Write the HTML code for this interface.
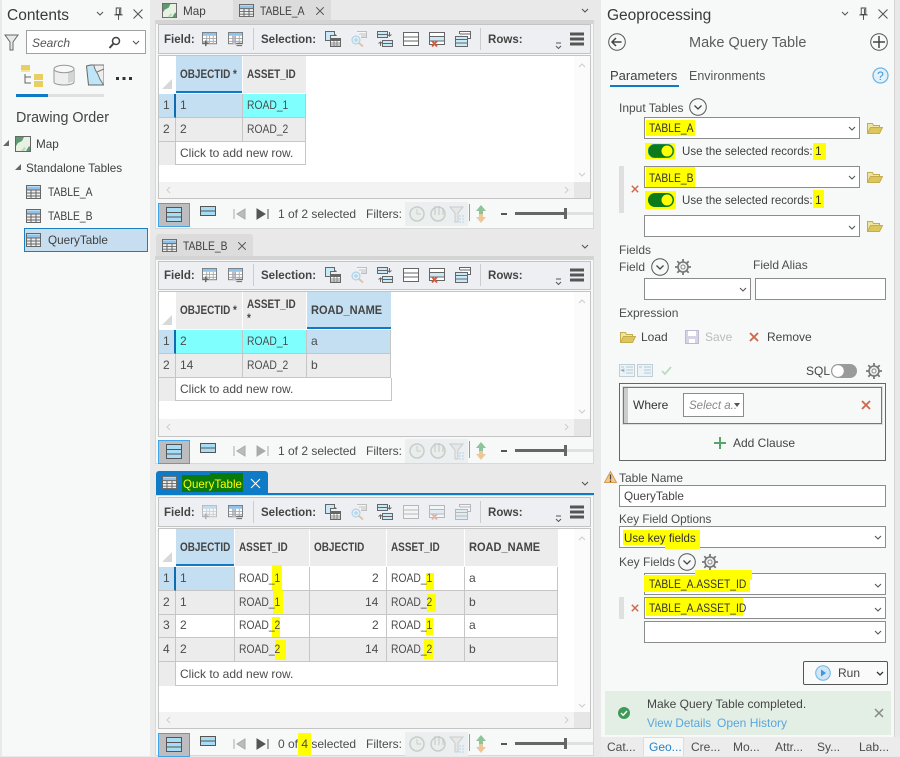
<!DOCTYPE html>
<html><head><meta charset="utf-8"><style>
html,body{margin:0;padding:0}
body{width:900px;height:756px;position:relative;overflow:hidden;background:#e9e9e9;font-family:"Liberation Sans",sans-serif;font-size:12px;color:#4c4c4c}
div,svg{position:absolute}
.t{position:absolute;line-height:16px;white-space:nowrap;height:16px}
.n,.b,.g,.k,.hd,.hn{transform-origin:0 50%}
.n{transform:scaleX(.96)}
.b{font-weight:bold;color:#444;transform:scaleX(.96)}
.g{color:#3f3f3f;transform:scaleX(.975)}
.k{transform:scaleX(.86)}
.hd{font-weight:bold;color:#444;font-size:11.500px;transform:scaleX(.865)}
.hn{font-weight:bold;color:#444;font-size:11.500px;transform:scaleX(.96)}
.y{background:#ff0;position:absolute}
.in{background:#fff;border:1px solid #8c8c8c;box-sizing:border-box}
.h{background:#ececec;box-sizing:border-box}
.c{box-sizing:border-box;border-right:1px solid #c6c6c6;border-bottom:1px solid #c6c6c6}
</style></head><body>
<svg width="0" height="0" style="left:0;top:0">
<defs>
<symbol id="tbl" viewBox="0 0 16 16"><rect x=".5" y="1.500" width="15" height="13" fill="#fff" stroke="#666"/><rect x="1" y="2" width="14" height="3" fill="#6eb4e6"/><path d="M1 5h14M1 8h14M1 11h14M4.500 5v9M8 5v9M11.500 5v9" stroke="#666" fill="none"/></symbol>
<symbol id="fadd" viewBox="0 0 16 16"><rect x=".5" y=".5" width="15" height="12" fill="#fff" stroke="#777"/><rect x="1" y="1" width="14" height="3" fill="#8cc4ee"/><path d="M1 7h14M1 10h14M5 4v9M8 4v9M12 4v9" stroke="#aaa" fill="none"/><path d="M1 12h6M4 9v6" stroke="#666" stroke-width="1.600" fill="none"/></symbol>
<symbol id="frem" viewBox="0 0 16 16"><rect x=".5" y=".5" width="15" height="12" fill="#fff" stroke="#777"/><rect x="1" y="1" width="14" height="3" fill="#8cc4ee"/><rect x="5" y="4" width="3" height="9" fill="#c9bddd"/><path d="M1 7h14M1 10h14M5 4v9M8 4v9M12 4v9" stroke="#aaa" fill="none"/><path d="M9 12h6M9 14.500h6" stroke="#666" fill="none"/></symbol>
<symbol id="sel" viewBox="0 0 16 16"><path d="M.5.500h9v3l2 1h-6v5H.5z" fill="#c8e9f8" stroke="#666"/><rect x="5.500" y="7.500" width="10" height="8" fill="#fff" stroke="#666"/><rect x="6" y="8" width="9" height="2" fill="#666"/><path d="M6 12h9M6 14h9M9 10v5M12 10v5" stroke="#888"/></symbol>
<symbol id="zoom" viewBox="0 0 16 16"><g opacity=".55"><path d="M6 .500h9.500v6H10" fill="#fff" stroke="#999"/><path d="M8 3h7M10 5h5" stroke="#999"/><circle cx="5" cy="9" r="4" fill="#d7eefb" stroke="#6fb2dc"/><path d="M3 9h4M5 7v4" stroke="#6fb2dc"/><path d="M8 12l4 3.500" stroke="#d8a070" stroke-width="2"/></g></symbol>
<symbol id="swi" viewBox="0 0 16 16"><rect x=".5" y=".5" width="10" height="6" fill="#c8e9f8" stroke="#666"/><path d="M1 3.500h9" stroke="#666"/><rect x="5.500" y="9.500" width="10" height="6" fill="#c8e9f8" stroke="#666"/><path d="M6 12.500h9" stroke="#666"/><path d="M12.500 1v4l-2-1.500M12.500 5l2-1.500M3.500 15v-4l-2 1.500M3.500 11l2 1.500" stroke="#666" fill="none"/></symbol>
<symbol id="clr" viewBox="0 0 16 16"><rect x=".5" y="1.500" width="15" height="13" fill="#fff" stroke="#666"/><path d="M1 6h14M1 10h14" stroke="#666"/></symbol>
<symbol id="del" viewBox="0 0 16 16"><rect x=".5" y="1.500" width="15" height="12" fill="#fff" stroke="#666"/><rect x="1" y="6" width="14" height="4" fill="#c8e9f8"/><path d="M1 5.500h14M1 10h14" stroke="#666"/><path d="M3 10l5 5.500M8 10l-5 5.500" stroke="#d0593b" stroke-width="1.800"/></symbol>
<symbol id="cpy" viewBox="0 0 16 16"><path d="M4.500 3V.5h11v7H13" fill="#fff" stroke="#666"/><path d="M5 3h10" stroke="#666"/><rect x=".5" y="5.500" width="12" height="10" fill="#c8e9f8" stroke="#666"/><path d="M1 8.500h11M1 12h11" stroke="#666" fill="#fff"/></symbol>
<symbol id="fold" viewBox="0 0 16 12"><path d="M.5 11.500V1.500h5l1 2h6v2" fill="#efe3a6" stroke="#c5ad4e"/><path d="M.5 11.500l3-6h12l-3 6z" fill="#dcc75d" stroke="#c5ad4e"/></symbol>
<symbol id="gear" viewBox="0 0 16 16"><circle cx="8" cy="8" r="5" fill="#eee" stroke="#777" stroke-width="1.600"/><circle cx="8" cy="8" r="2" fill="#fff" stroke="#888"/><path d="M8 0v3M8 13v3M0 8h3M13 8h3M2.300 2.300l2 2M11.700 11.700l2 2M13.700 2.300l-2 2M4.300 11.700l-2 2" stroke="#777" stroke-width="1.800"/></symbol>
<symbol id="chc" viewBox="0 0 18 18"><circle cx="9" cy="9" r="8.300" fill="none" stroke="#555" stroke-width="1"/><path d="M5.500 7.500l3.500 3.500 3.500-3.500" fill="none" stroke="#444" stroke-width="1.300"/></symbol>
<symbol id="x" viewBox="0 0 10 10"><path d="M1 1l8 8M9 1l-8 8" stroke="#d0654a" stroke-width="1.800" fill="none"/></symbol>
<symbol id="dd" viewBox="0 0 8 5"><path d="M1 1l3 3 3-3" fill="none" stroke="#555" stroke-width="1.100"/></symbol>
<symbol id="cl" viewBox="0 0 12 12"><path d="M1.500 1.500l9 9M10.500 1.500l-9 9" stroke="#555" stroke-width="1.100" fill="none"/></symbol>
<symbol id="pin" viewBox="0 0 12 14"><path d="M3.500 1h5v7h-5zM1.500 8.500h9M6 9v5M7 2v6" stroke="#444" fill="none"/></symbol>
<symbol id="map" viewBox="0 0 16 16"><rect x=".5" y=".5" width="15" height="15" fill="#e8f2e2" stroke="#666"/><path d="M1 1h8l-2 4-4 2-2 3z" fill="#5d9a72"/><path d="M11 15l3-5 1 1v4z" fill="#5d9a72"/><path d="M6 15l3-4 2 1-2 3z" fill="#bfd9c0"/></symbol>
<symbol id="tb" viewBox="0 0 15 14" preserveAspectRatio="none"><rect x=".5" y=".5" width="14" height="13" fill="#f0f0f0" stroke="#666"/><path d="M1 3h13" stroke="#8cc4ee" stroke-width="3"/><path d="M1 5h13M1 8h13M1 11h13M5 5v9M10 5v9" stroke="#666"/></symbol>
<symbol id="stat" viewBox="0 0 240 24">
<g fill="none">
<rect x=".5" y=".5" width="31" height="23" fill="#bdbdc0" stroke="#3ea6e8"/>
<rect x="8.500" y="4.500" width="15" height="14" fill="#a8dcf4" stroke="#555"/>
<path d="M8 9.500h16M8 14h16" stroke="#555" fill="#fff"/>
<rect x="42.500" y="3.500" width="15" height="9" fill="#a8dcf4" stroke="#555"/>
<path d="M42 8h16" stroke="#555"/>
</g></symbol>
<symbol id="filt" viewBox="0 0 64 24">
<rect width="63" height="24" fill="#eceff0"/>
<g opacity=".4"><circle cx="12" cy="12" r="7" fill="#e3efe3" stroke="#999" stroke-width="1.500"/><path d="M12 7v5h4" stroke="#999" fill="none"/>
<circle cx="33" cy="12" r="7" fill="#e3efe3" stroke="#999" stroke-width="1.500"/><path d="M30 4v9M34 4v9M38 6v7" stroke="#888"/>
<path d="M45 5h13l-5 6v9h-3v-9z" fill="#ddd" stroke="#999"/><path d="M54 14h6M54 17h6M54 20h6" stroke="#6fb2dc" stroke-dasharray="2 1"/></g></symbol>
<symbol id="updn" viewBox="0 0 10 18"><path d="M5 0l5 6H7v3H3V6H0z" fill="#8fc39a"/><path d="M5 18l5-6H7V9H3v3H0z" fill="#ecc79a"/></symbol>
</defs></svg>

<!-- contents panel -->
<div style="left:2px;top:0;width:148px;height:756px;background:#f7f8f8"></div>
<div class="t" style="left:7px;top:7px;font-size:15.500px;line-height:18px;height:18px;color:#3a3a3a">Contents</div>
<svg style="left:96px;top:11px" width="8" height="5"><use href="#dd"/></svg>
<svg style="left:113px;top:7px" width="11" height="13"><use href="#pin"/></svg>
<svg style="left:132px;top:8px" width="12" height="12"><use href="#cl"/></svg>
<svg style="left:4px;top:34px" width="15" height="17"><path d="M1 1h13L9 8v8H6V8z" fill="#e9e9e9" stroke="#666"/></svg>
<div style="left:26px;top:30px;width:120px;height:24px;background:#fff;border:1px solid #a0a0a0;box-sizing:border-box"></div>
<div class="t" style="left:32px;top:35px;font-style:italic;color:#555">Search</div>
<svg style="left:108px;top:36px" width="13" height="13"><circle cx="8" cy="5" r="3.500" fill="none" stroke="#444" stroke-width="1.500"/><path d="M5.500 7.500L1.500 12" stroke="#444" stroke-width="2"/></svg>
<svg style="left:132px;top:40px" width="8" height="5"><use href="#dd"/></svg>
<svg style="left:20px;top:64px" width="24" height="23"><path d="M5 10v9h6M5 13h6" fill="none" stroke="#666"/><rect x="1" y="1" width="9" height="5" fill="#e8cf62"/><rect x="1" y="6" width="9" height="2" fill="#f3e49a"/><rect x="14" y="10" width="9" height="6" fill="#e8cf62"/><rect x="14" y="17" width="9" height="6" fill="#e8cf62"/></svg>
<svg style="left:53px;top:64px" width="22" height="22"><path d="M1 5v13c0 4 20 4 20 0V5z" fill="#eee" stroke="#999"/><path d="M15 8v11l6-2V6z" fill="#d4d4d4"/><ellipse cx="11" cy="5" rx="10" ry="3.700" fill="#f8f8f8" stroke="#999"/></svg>
<svg style="left:86px;top:64px" width="18" height="22"><path d="M.5 2l4-1H18v20H2.500z" fill="#bfe6f8" stroke="#666"/><path d="M8 1c0 5 4 8 5 12s4 5 4 8h1V1z" fill="#eee" stroke="#777"/><path d="M11 8l7-3" stroke="#777"/></svg>
<svg style="left:116px;top:77px" width="16" height="3"><rect width="3" height="3" fill="#333"/><rect x="6.500" width="3" height="3" fill="#333"/><rect x="13" width="3" height="3" fill="#333"/></svg>
<div style="left:16px;top:94px;width:88px;height:3px;background:#e0e0e0"></div>
<div style="left:16px;top:94px;width:32px;height:3px;background:#0f7ac6"></div>
<div class="t" style="left:16px;top:110px;font-size:14.300px;color:#444">Drawing Order</div>
<svg style="left:3px;top:140px" width="7" height="7"><path d="M6 0v6H0z" fill="#666"/></svg>
<svg style="left:15px;top:136px" width="16" height="16"><use href="#map"/></svg>
<div class="t g" style="left:36px;top:136px">Map</div>
<svg style="left:15px;top:164px" width="7" height="7"><path d="M6 0v6H0z" fill="#666"/></svg>
<div class="t g" style="left:26px;top:160px">Standalone Tables</div>
<svg style="left:26px;top:185px" width="15" height="14"><use href="#tb"/></svg>
<div class="t k" style="left:48px;top:184px;color:#3f3f3f">TABLE_A</div>
<svg style="left:26px;top:209px" width="15" height="14"><use href="#tb"/></svg>
<div class="t k" style="left:48px;top:208px;color:#3f3f3f">TABLE_B</div>
<div style="left:24px;top:228px;width:124px;height:24px;background:#c7ddf0;border:1px solid #1a7fbf;box-sizing:border-box"></div>
<svg style="left:26px;top:233px" width="15" height="14"><use href="#tb"/></svg>
<div class="t g" style="left:48px;top:232px">QueryTable</div>

<!-- PANE 1 -->
<svg style="left:162px;top:3px" width="15" height="15"><use href="#map"/></svg>
<div class="t g" style="left:183px;top:3px">Map</div>
<div style="left:233px;top:0;width:98px;height:20px;background:#dcdcdc"></div>
<svg style="left:239px;top:4px" width="15" height="13"><use href="#tb"/></svg>
<div class="t k" style="left:260px;top:3px;color:#3f3f3f">TABLE_A</div>
<svg style="left:315px;top:6px" width="10" height="10"><use href="#cl"/></svg>
<svg style="left:581px;top:8px" width="8" height="5"><use href="#dd"/></svg>
<div style="left:155px;top:20px;width:439px;height:209px;background:#f7f8f8;border:1px solid #d8d8d8;border-top:4px solid #d4d4d4;box-sizing:border-box"></div>
<div style="left:158px;top:24px;width:433px;height:30px;background:#eeeff2;border:1px solid #c4c4c4;box-sizing:border-box"></div>
<div class="t b" style="left:164px;top:31px">Field:</div>
<svg style="left:202px;top:32px" width="15" height="15"><use href="#fadd"/></svg>
<svg style="left:228px;top:32px" width="15" height="15"><use href="#frem"/></svg>
<div style="left:253px;top:28px;width:1px;height:22px;background:#ccc"></div>
<div class="t b" style="left:261px;top:31px">Selection:</div>
<svg style="left:325px;top:31px" width="16" height="16"><use href="#sel"/></svg>
<svg style="left:351px;top:31px" width="16" height="16"><use href="#zoom"/></svg>
<svg style="left:377px;top:31px" width="16" height="16"><use href="#swi"/></svg>
<svg style="left:403px;top:31px" width="16" height="16"><use href="#clr"/></svg>
<svg style="left:429px;top:31px" width="16" height="16"><use href="#del"/></svg>
<svg style="left:455px;top:31px" width="16" height="16"><use href="#cpy"/></svg>
<div style="left:480px;top:28px;width:1px;height:22px;background:#ccc"></div>
<div class="t b" style="left:488px;top:31px">Rows:</div>
<svg style="left:555px;top:42px" width="7" height="7"><path d="M1 1h5M1 4l2.500 2.500L6 4" stroke="#555" fill="none"/></svg>
<svg style="left:570px;top:32px" width="14" height="14"><path d="M0 2h14M0 7h14M0 12h14" stroke="#555" stroke-width="3"/></svg>
<div style="left:158px;top:55px;width:433px;height:144px;background:#fff;border:1px solid #c4c4c4;box-sizing:border-box"></div>
<div style="left:574px;top:56px;width:16px;height:126px;background:#fbfbfb"></div>
<div style="left:159px;top:182px;width:431px;height:16px;background:#f3f3f3"></div>
<div style="left:574px;top:182px;width:16px;height:16px;background:#e6e6e6"></div>
<svg style="left:578px;top:63px" width="8" height="5"><path d="M1 4l3-3 3 3" stroke="#ccc" fill="none"/></svg>
<svg style="left:578px;top:172px" width="8" height="5"><path d="M1 1l3 3 3-3" stroke="#ccc" fill="none"/></svg>
<svg style="left:166px;top:186px" width="5" height="8"><path d="M4 1L1 4l3 3" stroke="#ccc" fill="none"/></svg>
<svg style="left:564px;top:186px" width="5" height="8"><path d="M1 1l3 3-3 3" stroke="#ccc" fill="none"/></svg>
<svg style="left:162px;top:79px" width="11" height="11"><path d="M10 0v10H0z" fill="#d8d8d8"/></svg>
<div class="h" style="left:176px;top:56px;width:66px;height:37px;background:#c5dff2;border-bottom:2px solid #0f7ac6"></div>
<div class="h" style="left:243px;top:56px;width:63px;height:37px"></div>
<div class="t hd" style="left:180px;top:67px">OBJECTID *</div>
<div class="t hd" style="left:247px;top:67px">ASSET_ID</div>
<div class="c" style="left:159px;top:94px;width:17px;height:24px;background:#c5dff2;border-right:2px solid #0f6cb0"></div>
<div class="c" style="left:176px;top:94px;width:67px;height:24px;background:#c5dff2"></div>
<div class="c" style="left:243px;top:94px;width:63px;height:24px;background:#80ffff"></div>
<div class="c" style="left:159px;top:118px;width:17px;height:24px;background:#ececec"></div>
<div class="c" style="left:176px;top:118px;width:67px;height:24px;background:#ececec"></div>
<div class="c" style="left:243px;top:118px;width:63px;height:24px;background:#ececec"></div>
<div style="left:159px;top:142px;width:17px;height:23px;background:#ececec"></div>
<div class="c" style="left:175px;top:142px;width:131px;height:23px;border-left:1px solid #c6c6c6"></div>
<div class="t" style="left:163px;top:97px">1</div><div class="t" style="left:180px;top:97px">1</div><div class="t k" style="left:247px;top:97px">ROAD_1</div>
<div class="t" style="left:163px;top:121px">2</div><div class="t" style="left:180px;top:121px">2</div><div class="t k" style="left:247px;top:121px">ROAD_2</div>
<div class="t" style="left:180px;top:145px">Click to add new row.</div>
<!-- status 1 -->
<svg style="left:158px;top:203px" width="240" height="24"><use href="#stat"/></svg>
<svg style="left:233px;top:208px" width="13" height="12"><path d="M1 1v10M12 1v10L4 6z" stroke="#aaa" fill="#bbb"/></svg>
<svg style="left:256px;top:208px" width="13" height="12"><path d="M12 1v10M1 1v10l8-5z" stroke="#555" fill="#555"/></svg>
<div class="t" style="left:278px;top:206px">1 of 2 selected</div>
<div class="t" style="left:366px;top:206px">Filters:</div>
<svg style="left:405px;top:202px" width="64" height="24"><use href="#filt"/></svg>
<div style="left:469px;top:204px;width:1px;height:17px;background:#999"></div>
<svg style="left:476px;top:205px" width="10" height="18"><use href="#updn"/></svg>
<div style="left:501px;top:213px;width:6px;height:2px;background:#555"></div>
<div style="left:515px;top:212px;width:50px;height:3px;background:#666"></div>
<div style="left:565px;top:212px;width:28px;height:3px;background:#e0e0e0"></div>
<div style="left:564px;top:208px;width:3px;height:11px;background:#666"></div>

<!-- PANE 2 -->
<div style="left:156px;top:234px;width:97px;height:22px;background:#dcdcdc;border-radius:3px 3px 0 0"></div>
<svg style="left:162px;top:239px" width="15" height="13"><use href="#tb"/></svg>
<div class="t k" style="left:183px;top:238px;color:#3f3f3f">TABLE_B</div>
<svg style="left:237px;top:241px" width="10" height="10"><use href="#cl"/></svg>
<svg style="left:581px;top:244px" width="8" height="5"><use href="#dd"/></svg>
<div style="left:155px;top:256px;width:439px;height:208px;background:#f7f8f8;border:1px solid #d8d8d8;border-top:4px solid #d4d4d4;box-sizing:border-box"></div>
<div style="left:158px;top:261px;width:433px;height:29px;background:#eeeff2;border:1px solid #c4c4c4;box-sizing:border-box"></div>
<div class="t b" style="left:164px;top:267px">Field:</div>
<svg style="left:202px;top:268px" width="15" height="15"><use href="#fadd"/></svg>
<svg style="left:228px;top:268px" width="15" height="15"><use href="#frem"/></svg>
<div style="left:253px;top:264px;width:1px;height:22px;background:#ccc"></div>
<div class="t b" style="left:261px;top:267px">Selection:</div>
<svg style="left:325px;top:267px" width="16" height="16"><use href="#sel"/></svg>
<svg style="left:351px;top:267px" width="16" height="16"><use href="#zoom"/></svg>
<svg style="left:377px;top:267px" width="16" height="16"><use href="#swi"/></svg>
<svg style="left:403px;top:267px" width="16" height="16"><use href="#clr"/></svg>
<svg style="left:429px;top:267px" width="16" height="16"><use href="#del"/></svg>
<svg style="left:455px;top:267px" width="16" height="16"><use href="#cpy"/></svg>
<div style="left:480px;top:264px;width:1px;height:22px;background:#ccc"></div>
<div class="t b" style="left:488px;top:267px">Rows:</div>
<svg style="left:555px;top:278px" width="7" height="7"><path d="M1 1h5M1 4l2.500 2.500L6 4" stroke="#555" fill="none"/></svg>
<svg style="left:570px;top:268px" width="14" height="14"><path d="M0 2h14M0 7h14M0 12h14" stroke="#555" stroke-width="3"/></svg>
<div style="left:158px;top:291px;width:433px;height:146px;background:#fff;border:1px solid #c4c4c4;box-sizing:border-box"></div>
<div style="left:574px;top:292px;width:16px;height:127px;background:#fbfbfb"></div>
<div style="left:159px;top:419px;width:431px;height:17px;background:#f3f3f3"></div>
<div style="left:574px;top:419px;width:16px;height:17px;background:#e6e6e6"></div>
<svg style="left:578px;top:299px" width="8" height="5"><path d="M1 4l3-3 3 3" stroke="#ccc" fill="none"/></svg>
<svg style="left:578px;top:409px" width="8" height="5"><path d="M1 1l3 3 3-3" stroke="#ccc" fill="none"/></svg>
<svg style="left:166px;top:423px" width="5" height="8"><path d="M4 1L1 4l3 3" stroke="#ccc" fill="none"/></svg>
<svg style="left:564px;top:423px" width="5" height="8"><path d="M1 1l3 3-3 3" stroke="#ccc" fill="none"/></svg>
<svg style="left:162px;top:315px" width="11" height="11"><path d="M10 0v10H0z" fill="#d8d8d8"/></svg>
<div class="h" style="left:176px;top:292px;width:66px;height:37px"></div>
<div class="h" style="left:243px;top:292px;width:63px;height:37px"></div>
<div class="h" style="left:307px;top:292px;width:84px;height:37px;background:#c5dff2;border-bottom:2px solid #0f7ac6"></div>
<div class="t hd" style="left:180px;top:303px">OBJECTID *</div>
<div class="t hd" style="left:247px;top:297px">ASSET_ID</div>
<div class="t hd" style="left:247px;top:311px">*</div>
<div class="t hn" style="left:311px;top:303px">ROAD_NAME</div>
<div class="c" style="left:159px;top:330px;width:17px;height:24px;background:#c5dff2;border-right:2px solid #0f6cb0"></div>
<div class="c" style="left:176px;top:330px;width:67px;height:24px;background:#80ffff"></div>
<div class="c" style="left:243px;top:330px;width:64px;height:24px;background:#80ffff"></div>
<div class="c" style="left:307px;top:330px;width:84px;height:24px;background:#c5dff2"></div>
<div class="c" style="left:159px;top:354px;width:17px;height:24px;background:#ececec"></div>
<div class="c" style="left:176px;top:354px;width:67px;height:24px;background:#ececec"></div>
<div class="c" style="left:243px;top:354px;width:64px;height:24px;background:#ececec"></div>
<div class="c" style="left:307px;top:354px;width:84px;height:24px;background:#ececec"></div>
<div style="left:159px;top:378px;width:17px;height:23px;background:#ececec"></div>
<div class="c" style="left:175px;top:378px;width:217px;height:23px;border-left:1px solid #c6c6c6"></div>
<div class="t" style="left:163px;top:333px">1</div><div class="t" style="left:180px;top:333px">2</div><div class="t k" style="left:247px;top:333px">ROAD_1</div><div class="t" style="left:311px;top:333px">a</div>
<div class="t" style="left:163px;top:357px">2</div><div class="t" style="left:180px;top:357px">14</div><div class="t k" style="left:247px;top:357px">ROAD_2</div><div class="t" style="left:311px;top:357px">b</div>
<div class="t" style="left:180px;top:381px">Click to add new row.</div>
<!-- status 2 -->
<svg style="left:158px;top:440px" width="240" height="24"><use href="#stat"/></svg>
<svg style="left:233px;top:445px" width="13" height="12"><path d="M1 1v10M12 1v10L4 6z" stroke="#aaa" fill="#bbb"/></svg>
<svg style="left:256px;top:445px" width="13" height="12"><path d="M12 1v10M1 1v10l8-5z" stroke="#aaa" fill="#aaa"/></svg>
<div class="t" style="left:278px;top:443px">1 of 2 selected</div>
<div class="t" style="left:366px;top:443px">Filters:</div>
<svg style="left:405px;top:439px" width="64" height="24"><use href="#filt"/></svg>
<div style="left:469px;top:441px;width:1px;height:17px;background:#999"></div>
<svg style="left:476px;top:442px" width="10" height="18"><use href="#updn"/></svg>
<div style="left:501px;top:450px;width:6px;height:2px;background:#555"></div>
<div style="left:515px;top:449px;width:50px;height:3px;background:#666"></div>
<div style="left:565px;top:449px;width:28px;height:3px;background:#e0e0e0"></div>
<div style="left:564px;top:445px;width:3px;height:11px;background:#666"></div>

<!-- PANE 3 -->
<div style="left:156px;top:471px;width:112px;height:23px;background:#0f7ac6;border-radius:3px 3px 0 0"></div>
<div style="left:156px;top:493px;width:438px;height:2px;background:#0f7ac6"></div>
<svg style="left:162px;top:476px" width="15" height="13"><use href="#tb"/></svg>
<div style="left:182px;top:475px;width:61px;height:17px;background:#0a7a0a"></div>
<div style="left:210px;top:473px;width:33px;height:18px;background:#0a7a0a"></div>
<div class="t n" style="left:183px;top:476px;color:#ff0">QueryTable</div>
<svg style="left:250px;top:478px" width="11" height="11"><path d="M1 1l9 9M10 1l-9 9" stroke="#fff" stroke-width="1.100"/></svg>
<svg style="left:581px;top:481px" width="8" height="5"><use href="#dd"/></svg>
<div style="left:155px;top:495px;width:439px;height:261px;background:#f7f8f8;border:1px solid #d8d8d8;box-sizing:border-box"></div>
<div style="left:158px;top:497px;width:433px;height:30px;background:#eeeff2;border:1px solid #c4c4c4;box-sizing:border-box"></div>
<div class="t b" style="left:164px;top:504px">Field:</div>
<svg style="left:202px;top:505px;opacity:.45" width="15" height="15"><use href="#fadd"/></svg>
<svg style="left:228px;top:505px" width="15" height="15"><use href="#frem"/></svg>
<div style="left:253px;top:501px;width:1px;height:22px;background:#ccc"></div>
<div class="t b" style="left:261px;top:504px">Selection:</div>
<svg style="left:325px;top:504px" width="16" height="16"><use href="#sel"/></svg>
<svg style="left:351px;top:504px" width="16" height="16"><use href="#zoom"/></svg>
<svg style="left:377px;top:504px" width="16" height="16"><use href="#swi"/></svg>
<svg style="left:403px;top:504px;opacity:.4" width="16" height="16"><use href="#clr"/></svg>
<svg style="left:429px;top:504px;opacity:.4" width="16" height="16"><use href="#del"/></svg>
<svg style="left:455px;top:504px;opacity:.4" width="16" height="16"><use href="#cpy"/></svg>
<div style="left:480px;top:501px;width:1px;height:22px;background:#ccc"></div>
<div class="t b" style="left:488px;top:504px">Rows:</div>
<svg style="left:555px;top:515px" width="7" height="7"><path d="M1 1h5M1 4l2.500 2.500L6 4" stroke="#555" fill="none"/></svg>
<svg style="left:570px;top:505px" width="14" height="14"><path d="M0 2h14M0 7h14M0 12h14" stroke="#555" stroke-width="3"/></svg>
<div style="left:158px;top:528px;width:433px;height:201px;background:#fff;border:1px solid #c4c4c4;box-sizing:border-box"></div>
<div style="left:574px;top:529px;width:16px;height:183px;background:#fbfbfb"></div>
<div style="left:159px;top:712px;width:431px;height:16px;background:#f3f3f3"></div>
<div style="left:574px;top:712px;width:16px;height:16px;background:#e6e6e6"></div>
<svg style="left:578px;top:536px" width="8" height="5"><path d="M1 4l3-3 3 3" stroke="#ccc" fill="none"/></svg>
<svg style="left:578px;top:703px" width="8" height="5"><path d="M1 1l3 3 3-3" stroke="#ccc" fill="none"/></svg>
<svg style="left:166px;top:716px" width="5" height="8"><path d="M4 1L1 4l3 3" stroke="#ccc" fill="none"/></svg>
<svg style="left:564px;top:716px" width="5" height="8"><path d="M1 1l3 3-3 3" stroke="#ccc" fill="none"/></svg>
<svg style="left:162px;top:552px" width="11" height="11"><path d="M10 0v10H0z" fill="#d8d8d8"/></svg>
<div class="h" style="left:176px;top:529px;width:58px;height:37px;background:#c5dff2;border-bottom:2px solid #0f7ac6"></div>
<div class="h" style="left:235px;top:529px;width:74px;height:37px"></div>
<div class="h" style="left:310px;top:529px;width:76px;height:37px"></div>
<div class="h" style="left:387px;top:529px;width:77px;height:37px"></div>
<div class="h" style="left:465px;top:529px;width:93px;height:37px"></div>
<div class="t hd" style="left:180px;top:540px">OBJECTID</div>
<div class="t hd" style="left:239px;top:540px">ASSET_ID</div>
<div class="t hd" style="left:314px;top:540px">OBJECTID</div>
<div class="t hd" style="left:391px;top:540px">ASSET_ID</div>
<div class="t hn" style="left:469px;top:540px">ROAD_NAME</div>
<!-- rows -->
<div class="c" style="left:159px;top:567px;width:17px;height:24px;background:#c5dff2;border-right:2px solid #0f6cb0"></div>
<div class="c" style="left:176px;top:567px;width:59px;height:24px;background:#c5dff2"></div>
<div class="c" style="left:235px;top:567px;width:75px;height:24px"></div>
<div class="c" style="left:310px;top:567px;width:77px;height:24px"></div>
<div class="c" style="left:387px;top:567px;width:78px;height:24px"></div>
<div class="c" style="left:465px;top:567px;width:93px;height:24px"></div>
<div class="c" style="left:159px;top:591px;width:17px;height:24px;background:#ececec"></div>
<div class="c" style="left:176px;top:591px;width:59px;height:24px;background:#ececec"></div>
<div class="c" style="left:235px;top:591px;width:75px;height:24px;background:#ececec"></div>
<div class="c" style="left:310px;top:591px;width:77px;height:24px;background:#ececec"></div>
<div class="c" style="left:387px;top:591px;width:78px;height:24px;background:#ececec"></div>
<div class="c" style="left:465px;top:591px;width:93px;height:24px;background:#ececec"></div>
<div class="c" style="left:159px;top:615px;width:17px;height:23px;background:#ececec"></div>
<div class="c" style="left:176px;top:615px;width:59px;height:23px"></div>
<div class="c" style="left:235px;top:615px;width:75px;height:23px"></div>
<div class="c" style="left:310px;top:615px;width:77px;height:23px"></div>
<div class="c" style="left:387px;top:615px;width:78px;height:23px"></div>
<div class="c" style="left:465px;top:615px;width:93px;height:23px"></div>
<div class="c" style="left:159px;top:638px;width:17px;height:24px;background:#ececec"></div>
<div class="c" style="left:176px;top:638px;width:59px;height:24px;background:#ececec"></div>
<div class="c" style="left:235px;top:638px;width:75px;height:24px;background:#ececec"></div>
<div class="c" style="left:310px;top:638px;width:77px;height:24px;background:#ececec"></div>
<div class="c" style="left:387px;top:638px;width:78px;height:24px;background:#ececec"></div>
<div class="c" style="left:465px;top:638px;width:93px;height:24px;background:#ececec"></div>
<div style="left:159px;top:662px;width:17px;height:24px;background:#ececec"></div>
<div class="c" style="left:175px;top:662px;width:383px;height:24px;border-left:1px solid #c6c6c6"></div>
<!-- yellow marks -->
<div class="y" style="left:272px;top:565px;width:10px;height:25px"></div>
<div class="y" style="left:273px;top:589px;width:10px;height:25px"></div>
<div class="y" style="left:272px;top:617px;width:8px;height:20px"></div>
<div class="y" style="left:275px;top:640px;width:11px;height:20px"></div>
<div class="y" style="left:426px;top:573px;width:8px;height:17px"></div>
<div class="y" style="left:427px;top:594px;width:9px;height:18px"></div>
<div class="y" style="left:426px;top:618px;width:7px;height:17px"></div>
<div class="y" style="left:424px;top:639px;width:9px;height:20px"></div>
<div class="y" style="left:298px;top:733px;width:13px;height:23px"></div>
<div class="t" style="left:163px;top:570px">1</div><div class="t" style="left:180px;top:570px">1</div><div class="t k" style="left:239px;top:570px">ROAD_1</div><div class="t" style="left:372px;top:570px">2</div><div class="t k" style="left:391px;top:570px">ROAD_1</div><div class="t" style="left:469px;top:570px">a</div>
<div class="t" style="left:163px;top:594px">2</div><div class="t" style="left:180px;top:594px">1</div><div class="t k" style="left:239px;top:594px">ROAD_1</div><div class="t" style="left:365px;top:594px">14</div><div class="t k" style="left:391px;top:594px">ROAD_2</div><div class="t" style="left:469px;top:594px">b</div>
<div class="t" style="left:163px;top:617px">3</div><div class="t" style="left:180px;top:617px">2</div><div class="t k" style="left:239px;top:617px">ROAD_2</div><div class="t" style="left:372px;top:617px">2</div><div class="t k" style="left:391px;top:617px">ROAD_1</div><div class="t" style="left:469px;top:617px">a</div>
<div class="t" style="left:163px;top:641px">4</div><div class="t" style="left:180px;top:641px">2</div><div class="t k" style="left:239px;top:641px">ROAD_2</div><div class="t" style="left:365px;top:641px">14</div><div class="t k" style="left:391px;top:641px">ROAD_2</div><div class="t" style="left:469px;top:641px">b</div>
<div class="t" style="left:180px;top:666px">Click to add new row.</div>
<!-- status 3 -->
<svg style="left:158px;top:733px" width="240" height="24"><use href="#stat"/></svg>
<svg style="left:233px;top:738px" width="13" height="12"><path d="M1 1v10M12 1v10L4 6z" stroke="#aaa" fill="#bbb"/></svg>
<svg style="left:256px;top:738px" width="13" height="12"><path d="M12 1v10M1 1v10l8-5z" stroke="#555" fill="#555"/></svg>
<div class="t" style="left:278px;top:736px">0 of 4 selected</div>
<div class="t" style="left:366px;top:736px">Filters:</div>
<svg style="left:405px;top:732px" width="64" height="24"><use href="#filt"/></svg>
<div style="left:469px;top:734px;width:1px;height:17px;background:#999"></div>
<svg style="left:476px;top:735px" width="10" height="18"><use href="#updn"/></svg>
<div style="left:501px;top:743px;width:6px;height:2px;background:#555"></div>
<div style="left:515px;top:742px;width:50px;height:3px;background:#666"></div>
<div style="left:565px;top:742px;width:28px;height:3px;background:#e0e0e0"></div>
<div style="left:564px;top:738px;width:3px;height:11px;background:#666"></div>

<!-- GEOPROCESSING -->
<div style="left:601px;top:0;width:294px;height:737px;background:#f7f9f9;border-right:1px solid #d5d5d5;box-sizing:border-box"></div>
<div class="t" style="left:607px;top:7px;font-size:15.500px;line-height:18px;height:18px;color:#3a3a3a">Geoprocessing</div>
<svg style="left:841px;top:11px" width="8" height="5"><use href="#dd"/></svg>
<svg style="left:858px;top:7px" width="11" height="13"><use href="#pin"/></svg>
<svg style="left:877px;top:8px" width="12" height="12"><use href="#cl"/></svg>
<svg style="left:608px;top:33px" width="18" height="18"><circle cx="9" cy="9" r="8.300" fill="none" stroke="#555"/><path d="M13.500 9h-9M8 5L4 9l4 4" fill="none" stroke="#444" stroke-width="1.500"/></svg>
<div class="t" style="left:689px;top:35px;font-size:14.500px;color:#5c5c5c">Make Query Table</div>
<svg style="left:870px;top:33px" width="18" height="18"><circle cx="9" cy="9" r="8.300" fill="none" stroke="#555"/><path d="M9 3v12M3 9h12" stroke="#444" stroke-width="1.500"/></svg>
<div class="t" style="left:610px;top:68px;font-size:13px;color:#3f3f3f">Parameters</div>
<div style="left:610px;top:85px;width:69px;height:2px;background:#0f7ac6"></div>
<div class="t" style="left:689px;top:68px;font-size:12.500px;color:#555">Environments</div>
<svg style="left:872px;top:67px" width="17" height="17"><circle cx="8.500" cy="8.500" r="7.500" fill="#e3f1fb" stroke="#6cb4e6" stroke-width="1.300"/><text x="8.500" y="13" font-size="12" font-family="Liberation Sans" fill="#3d97d8" text-anchor="middle">?</text></svg>
<div class="t" style="left:619px;top:100px">Input Tables</div>
<svg style="left:689px;top:98px" width="18" height="18"><use href="#chc"/></svg>
<div class="in" style="left:644px;top:117px;width:216px;height:22px"></div>
<div class="y" style="left:646px;top:120px;width:49px;height:16px"></div>
<div class="t k" style="left:649px;top:120px;color:#333">TABLE_A</div>
<svg style="left:848px;top:126px" width="8" height="5"><use href="#dd"/></svg>
<svg style="left:867px;top:122px" width="16" height="12"><use href="#fold"/></svg>
<div class="y" style="left:645px;top:143px;width:30px;height:16px"></div>
<svg style="left:648px;top:144px" width="27" height="14"><rect width="26" height="14" rx="7" fill="#0a7a1a" stroke="#5aa7dc" stroke-width=".6"/><circle cx="19" cy="7" r="5.500" fill="#ff0"/></svg>
<div class="t n" style="left:682px;top:143px;color:#3f3f3f">Use the selected records:</div>
<div class="y" style="left:813px;top:143px;width:13px;height:17px"></div>
<div class="t" style="left:815px;top:143px;color:#333">1</div>
<div style="left:619px;top:166px;width:5px;height:47px;background:#dfdfdf"></div>
<svg style="left:631px;top:185px" width="8" height="8"><use href="#x"/></svg>
<div class="in" style="left:644px;top:166px;width:216px;height:22px"></div>
<div class="y" style="left:646px;top:167px;width:49px;height:20px"></div>
<div class="t k" style="left:649px;top:170px;color:#333">TABLE_B</div>
<svg style="left:848px;top:175px" width="8" height="5"><use href="#dd"/></svg>
<svg style="left:867px;top:171px" width="16" height="12"><use href="#fold"/></svg>
<div class="y" style="left:645px;top:191px;width:31px;height:18px"></div>
<svg style="left:648px;top:193px" width="27" height="14"><rect width="26" height="14" rx="7" fill="#0a7a1a"/><circle cx="19" cy="7" r="5.500" fill="#ff0"/></svg>
<div class="t n" style="left:682px;top:192px;color:#3f3f3f">Use the selected records:</div>
<div class="y" style="left:813px;top:190px;width:11px;height:18px"></div>
<div class="t" style="left:815px;top:192px;color:#333">1</div>
<div class="in" style="left:644px;top:215px;width:216px;height:22px"></div>
<svg style="left:848px;top:225px" width="8" height="5"><use href="#dd"/></svg>
<svg style="left:867px;top:220px" width="16" height="12"><use href="#fold"/></svg>
<div class="t" style="left:619px;top:242px">Fields</div>
<div class="t" style="left:619px;top:259px">Field</div>
<svg style="left:651px;top:258px" width="18" height="18"><use href="#chc"/></svg>
<svg style="left:675px;top:259px" width="16" height="16"><use href="#gear"/></svg>
<div class="t" style="left:753px;top:257px">Field Alias</div>
<div class="in" style="left:644px;top:278px;width:107px;height:22px"></div>
<svg style="left:739px;top:287px" width="8" height="5"><use href="#dd"/></svg>
<div class="in" style="left:755px;top:278px;width:131px;height:22px"></div>
<div class="t" style="left:619px;top:305px">Expression</div>
<svg style="left:620px;top:331px" width="16" height="12"><use href="#fold"/></svg>
<div class="t" style="left:641px;top:329px;color:#444">Load</div>
<svg style="left:685px;top:330px" width="14" height="14"><rect x=".5" y=".5" width="13" height="13" fill="#d6d3e2" stroke="#bdb9d0"/><rect x="3" y="1" width="8" height="5" fill="#fff"/><rect x="4" y="9" width="6" height="4" fill="#fff"/></svg>
<div class="t" style="left:705px;top:329px;color:#bbb">Save</div>
<svg style="left:749px;top:332px" width="10" height="10"><use href="#x"/></svg>
<div class="t" style="left:767px;top:329px;color:#444">Remove</div>
<svg style="left:619px;top:364px" width="34" height="13" opacity=".55"><rect x=".5" y=".5" width="15" height="12" fill="#e6f0f8" stroke="#9ab"/><rect x="18.500" y=".5" width="15" height="12" fill="#e6f0f8" stroke="#9ab"/><path d="M2 3h3M7 3h7M7 6h7M7 9h7M2 6l3-1v3zM20 3h3M25 3h7M25 6h7M25 9h7" stroke="#7ab"/></svg>
<svg style="left:661px;top:366px" width="11" height="9"><path d="M1 5l3 3 6-7" fill="none" stroke="#bcdcc0" stroke-width="1.800"/></svg>
<div class="t" style="left:806px;top:363px;color:#444">SQL</div>
<svg style="left:831px;top:364px" width="26" height="14"><rect width="26" height="14" rx="7" fill="#9a9a9a"/><circle cx="7" cy="7" r="5.800" fill="#fff"/></svg>
<svg style="left:866px;top:363px" width="16" height="16"><use href="#gear"/></svg>
<div style="left:619px;top:383px;width:267px;height:78px;border:1px solid #666;box-sizing:border-box"></div>
<div style="left:623px;top:387px;width:259px;height:37px;background:#f7f9f9;border:1px solid #777;box-sizing:border-box;box-shadow:0 0 0 1px #ddd"></div>
<div style="left:624px;top:388px;width:4px;height:35px;background:#ccc"></div>
<div class="t" style="left:633px;top:397px;color:#333">Where</div>
<div class="in" style="left:683px;top:393px;width:61px;height:24px"></div>
<div class="t n" style="left:689px;top:397px;font-style:italic;color:#888">Select a..</div>
<svg style="left:734px;top:403px" width="6" height="4"><path d="M0 0h6L3 4z" fill="#555"/></svg>
<svg style="left:861px;top:400px" width="10" height="10"><use href="#x"/></svg>
<svg style="left:714px;top:437px" width="12" height="12"><path d="M6 0v12M0 6h12" stroke="#5aa469" stroke-width="2"/></svg>
<div class="t" style="left:733px;top:435px;color:#444">Add Clause</div>
<svg style="left:604px;top:471px" width="13" height="12"><path d="M6.500 .5L12.500 11.500H.5z" fill="#f4c98c" stroke="#d79a52"/><path d="M6.500 3.500v5M6.500 9.500v1.500" stroke="#444" stroke-width="1.300"/></svg>
<div class="t" style="left:619px;top:470px">Table Name</div>
<div class="in" style="left:619px;top:485px;width:267px;height:22px"></div>
<div class="t g" style="left:624px;top:488px;color:#444">QueryTable</div>
<div class="t g" style="left:619px;top:511px;color:#4c4c4c">Key Field Options</div>
<div class="in" style="left:619px;top:526px;width:267px;height:22px"></div>
<div class="y" style="left:623px;top:530px;width:77px;height:15px"></div>
<div class="y" style="left:665px;top:540px;width:35px;height:9px"></div>
<div class="t n" style="left:624px;top:530px;color:#333">Use key fields</div>
<svg style="left:874px;top:535px" width="8" height="5"><use href="#dd"/></svg>
<div class="t" style="left:619px;top:554px">Key Fields</div>
<svg style="left:678px;top:553px" width="18" height="18"><use href="#chc"/></svg>
<svg style="left:702px;top:554px" width="16" height="16"><use href="#gear"/></svg>
<div class="in" style="left:644px;top:573px;width:242px;height:22px"></div>
<div class="y" style="left:644px;top:575px;width:106px;height:17px"></div>
<div class="y" style="left:695px;top:570px;width:57px;height:10px"></div>
<div class="t k" style="left:649px;top:576px;color:#333">TABLE_A.ASSET_ID</div>
<svg style="left:874px;top:583px" width="8" height="5"><use href="#dd"/></svg>
<div style="left:619px;top:597px;width:5px;height:22px;background:#dfdfdf"></div>
<svg style="left:631px;top:604px" width="8" height="8"><use href="#x"/></svg>
<div class="in" style="left:644px;top:597px;width:242px;height:22px"></div>
<div class="y" style="left:646px;top:598px;width:97px;height:18px"></div>
<div class="t k" style="left:649px;top:600px;color:#333">TABLE_A.ASSET_ID</div>
<svg style="left:874px;top:607px" width="8" height="5"><use href="#dd"/></svg>
<div class="in" style="left:644px;top:621px;width:242px;height:22px"></div>
<svg style="left:874px;top:630px" width="8" height="5"><use href="#dd"/></svg>
<div style="left:803px;top:661px;width:85px;height:24px;background:#fafafa;border:1px solid #555;border-radius:2px;box-sizing:border-box"></div>
<svg style="left:815px;top:665px" width="16" height="16"><circle cx="8" cy="8" r="7.300" fill="#cfe6f8" stroke="#6cb4e6"/><path d="M6 4.500l5 3.500-5 3.500z" fill="#3d97d8"/></svg>
<div class="t" style="left:838px;top:665px;color:#444">Run</div>
<svg style="left:876px;top:671px" width="8" height="5"><path d="M1 1l3 3 3-3" fill="none" stroke="#333" stroke-width="1.300"/></svg>
<div style="left:605px;top:691px;width:286px;height:44px;background:#e3efe4"></div>
<svg style="left:618px;top:707px" width="12" height="12"><circle cx="6" cy="6" r="6" fill="#3f9a5a"/><path d="M3 6l2.200 2.200L9 4" fill="none" stroke="#fff" stroke-width="1.400"/></svg>
<div class="t" style="left:647px;top:696px;color:#444">Make Query Table completed.</div>
<div class="t g" style="left:647px;top:715px;color:#58a6dc">View Details</div>
<div class="t" style="left:717px;top:715px;color:#58a6dc">Open History</div>
<svg style="left:874px;top:708px" width="10" height="10"><path d="M1 1l8 8M9 1l-8 8" stroke="#888" stroke-width="1.500"/></svg>
<div style="left:601px;top:737px;width:299px;height:19px;background:#ececec"></div>
<div style="left:643px;top:737px;width:41px;height:19px;background:#f7f9f9;border:1px solid #ddd;border-bottom:none;box-sizing:border-box"></div>
<div class="t" style="left:607px;top:739px">Cat...</div>
<div class="t" style="left:649px;top:739px;color:#2a82c8">Geo...</div>
<div class="t" style="left:691px;top:739px">Cre...</div>
<div class="t" style="left:733px;top:739px">Mo...</div>
<div class="t" style="left:775px;top:739px">Attr...</div>
<div class="t" style="left:817px;top:739px">Sy...</div>
<div class="t" style="left:859px;top:739px">Lab...</div>
</body></html>
